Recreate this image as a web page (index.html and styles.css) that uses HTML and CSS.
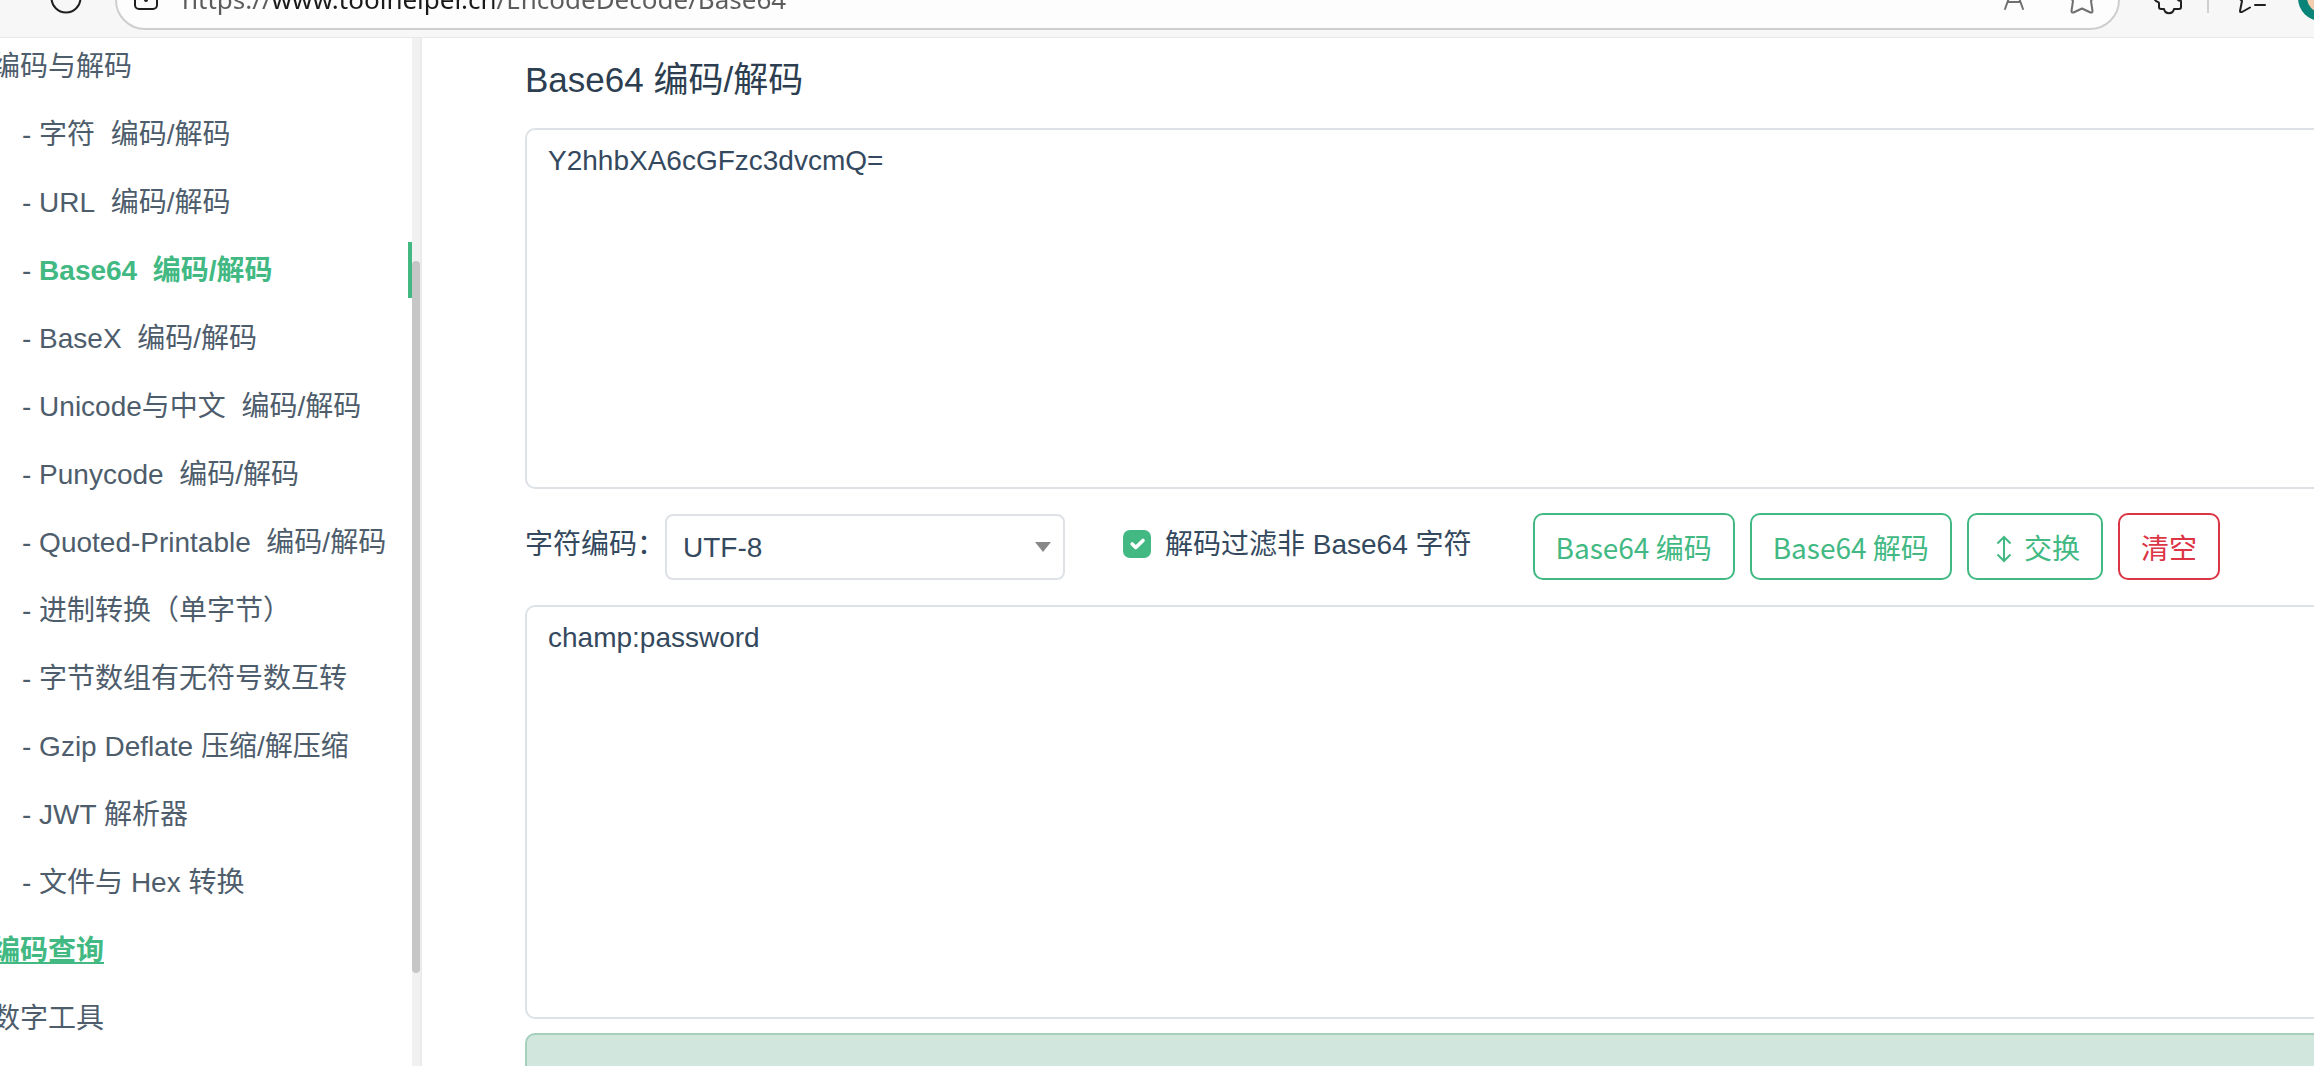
FILE: index.html
```html
<!DOCTYPE html>
<html lang="zh-CN">
<head>
  <meta charset="UTF-8" />
  <meta name="viewport" content="width=device-width, initial-scale=1.0"/>
  <title>Base64 编码/解码</title>
  <link rel="stylesheet" href="styles.css">
</head>
<body>
  <header class="toolbar">
    <button class="icon-btn reload" aria-label="刷新">
      <svg viewBox="0 0 40 60"><circle cx="20" cy="28" r="14.5"/></svg>
    </button>
    <div class="address">
      <svg viewBox="0 0 40 60"><rect x="9" y="18" width="22" height="21" rx="4"/><circle class="dot" cx="20" cy="30" r="2"/></svg>
      <input class="url" type="text" aria-label="地址" value="https://www.toolhelper.cn/EncodeDecode/Base64">
      <button class="icon-btn muted" aria-label="朗读">
        <svg viewBox="0 0 40 60"><path d="M11 39 L20 14 L29 39 M13.500 32 H26.500"/></svg>
      </button>
      <button class="icon-btn muted" aria-label="收藏">
        <svg viewBox="0 0 40 60"><path d="M20 14 L24 23 L33 24 L29 31 L30.500 41 Q30.500 43 28.500 42.500 L20 38.500 L11.500 42.500 Q9.500 43 9.500 41 L11 31 L6 24 L16 23 Z"/></svg>
      </button>
    </div>
    <button class="icon-btn" aria-label="扩展">
      <svg viewBox="0 0 40 60"><path d="M7 30 C9 33 11 31 11 33 V37 Q11 39 13 39 H16 C17 44.500 25 44.500 26 39 H31 Q33 39 33 37 V31 C28 31 28 24 33 24 V18 H7 Z"/></svg>
    </button>
    <span class="divider"></span>
    <button class="icon-btn" aria-label="收藏夹">
      <svg viewBox="0 0 40 60"><path d="M10 27 L14 31 L12 41 Q12 42.500 14 42 L22 37.500 M27 35 H37"/></svg>
    </button>
    <span class="avatar"><i></i></span>
  </header>

  <div class="layout">
    <aside class="sidebar">
      <nav class="menu">
        <a class="group" href="#">编码与解码</a>
        <ul>
          <li>- <a href="#">字符&nbsp; 编码/解码</a></li>
          <li>- <a href="#">URL&nbsp; 编码/解码</a></li>
          <li class="active">- <a href="#">Base64&nbsp; 编码/解码</a></li>
          <li>- <a href="#">BaseX&nbsp; 编码/解码</a></li>
          <li>- <a href="#">Unicode与中文&nbsp; 编码/解码</a></li>
          <li>- <a href="#">Punycode&nbsp; 编码/解码</a></li>
          <li>- <a href="#">Quoted-Printable&nbsp; 编码/解码</a></li>
          <li>- <a href="#">进制转换（单字节）</a></li>
          <li>- <a href="#">字节数组有无符号数互转</a></li>
          <li>- <a href="#">Gzip Deflate 压缩/解压缩</a></li>
          <li>- <a href="#">JWT 解析器</a></li>
          <li>- <a href="#">文件与 Hex 转换</a></li>
        </ul>
        <a class="group hover" href="#">编码查询</a>
        <a class="group" href="#">数字工具</a>
      </nav>
      <div class="scrollbar"><div class="thumb"></div></div>
    </aside>

    <main class="content">
      <h1>Base64 编码/解码</h1>
      <textarea class="source" aria-label="输入">Y2hhbXA6cGFzc3dvcmQ=</textarea>

      <div class="controls">
        <label for="charset">字符编码：</label>
        <div class="select">
          <select id="charset">
            <option>UTF-8</option>
            <option>GBK</option>
          </select>
        </div>
        <input type="checkbox" id="filter" checked>
        <label for="filter">解码过滤非 Base64 字符</label>
        <div class="buttons">
          <button class="btn">Base64 编码</button>
          <button class="btn">Base64 解码</button>
          <button class="btn"><svg viewBox="0 0 28 28"><path d="M14 2 V26 M7.500 8.500 L14 2 L20.500 8.500 M7.500 19.500 L14 26 L20.500 19.500"/></svg> 交换</button>
          <button class="btn danger">清空</button>
        </div>
      </div>

      <textarea class="result" aria-label="输出">champ:password</textarea>
      <div class="alert"></div>
    </main>
  </div>
</body>
</html>
```
FILE: styles.css
```css
* {
  box-sizing: border-box;
}

body {
  margin: 0;
  height: 100vh;
  display: flex;
  flex-direction: column;
  overflow: hidden;
  background-color: #fff;
  color: #34495e;
  font-family: "Liberation Sans", "Noto Sans CJK SC", sans-serif;
  font-size: 28px;
  line-height: 42px;
}

a {
  color: inherit;
  text-decoration: none;
}

button,
input,
select,
textarea {
  font: inherit;
  color: inherit;
}

/* browser bar */
.toolbar {
  flex: none;
  display: flex;
  align-items: flex-end;
  height: 38px;
  padding: 0 0 7px 46px;
  overflow: hidden;
  background-color: #f7f7f7;
  border-bottom: 1px solid #e8e8e8;
}

.toolbar svg {
  display: block;
  flex: none;
  width: 40px;
  height: 60px;
  fill: none;
  stroke: #1f1f1f;
  stroke-width: 2;
  stroke-linecap: round;
  stroke-linejoin: round;
}

.toolbar svg .dot {
  fill: #1f1f1f;
  stroke: none;
}

.icon-btn {
  flex: none;
  padding: 0;
  border: none;
  background: none;
}

.reload {
  margin-right: 29px;
}

.toolbar .muted svg {
  stroke: #707070;
}

.address {
  flex: 1;
  display: flex;
  align-items: center;
  height: 60px;
  margin-right: 28px;
  padding: 0 16px 0 9px;
  background-color: #fdfdfd;
  border: 2px solid #cecece;
  border-radius: 30px;
}

.address .icon-btn + .icon-btn {
  margin-left: 28px;
}

/* host name is darker than the rest of the url */
.url {
  flex: 1;
  min-width: 0;
  height: 42px;
  margin-left: 16px;
  padding: 0 0 2px;
  border: none;
  outline: none;
  font-family: "Noto Sans", sans-serif;
  font-size: 26px;
  background: linear-gradient(to right, #5c5c5c 89px, #1a1a1a 89px, #1a1a1a 312px, #5c5c5c 312px);
  -webkit-background-clip: text;
  background-clip: text;
  -webkit-text-fill-color: transparent;
}

.divider {
  flex: none;
  width: 2px;
  height: 40px;
  margin: 0 19px 17px;
  background-color: #d0d0d0;
}

.avatar {
  flex: none;
  display: flex;
  align-items: center;
  justify-content: center;
  width: 46px;
  height: 46px;
  margin: 0 -30px 9px 30px;
  border-radius: 50%;
  background-color: #0a8378;
}

.avatar i {
  width: 28px;
  height: 28px;
  border-radius: 50%;
  background-color: #f3cdb0;
}

.layout {
  flex: 1;
  display: flex;
  min-height: 0;
}

/* sidebar */
.sidebar {
  flex: none;
  display: flex;
  width: 422px;
  border-right: 2px solid #ebebeb;
  color: #4e5d6c;
}

.menu {
  flex: 1;
  display: flex;
  flex-direction: column;
  gap: 12px;
  overflow: hidden;
  line-height: 57px;
}

.menu .group {
  height: 56px;
  margin-left: -8px;
}

.menu .hover {
  color: #42b983;
  font-weight: bold;
  text-decoration: underline;
}

.menu ul {
  display: flex;
  flex-direction: column;
  gap: 12px;
  margin: 0;
  padding: 0;
  list-style: none;
}

.menu li {
  height: 56px;
  padding-left: 22px;
  white-space: nowrap;
}

.menu .active {
  border-right: 4px solid #42b983;
}

.menu .active a {
  color: #42b983;
  font-weight: bold;
}

.scrollbar {
  width: 8px;
  background-color: #f1f1f1;
}

.thumb {
  height: 712px;
  margin-top: 223px;
  border-radius: 4px;
  background-color: #c6c6c6;
}

/* main area, runs past the right edge of the window */
.content {
  flex: 1;
  display: flex;
  flex-direction: column;
  margin-right: -40px;
  padding: 21px 0 0 103px;
  overflow: hidden;
}

h1 {
  margin: 0 0 27px;
  color: #2c3e50;
  font-size: 35px;
  font-weight: normal;
  line-height: 42px;
}

textarea {
  display: block;
  flex: none;
  width: 100%;
  padding: 10px 21px;
  border: 2px solid #dee2e6;
  border-radius: 10px;
  outline: none;
  resize: none;
  background-color: #fff;
}

.source {
  height: 361px;
}

.result {
  height: 414px;
}

.controls {
  flex: none;
  display: flex;
  align-items: center;
  margin: 24px 0 25px;
}

.controls label {
  padding-bottom: 4px;
}

.select {
  position: relative;
  width: 400px;
}

.select select {
  display: block;
  width: 100%;
  height: 66px;
  padding: 2px 16px 0;
  appearance: none;
  border: 2px solid #dee2e6;
  border-radius: 8px;
  background-color: #fff;
}

.select::after {
  content: "";
  position: absolute;
  top: 28px;
  right: 14px;
  border: 8px solid transparent;
  border-top: 10px solid #888;
  border-bottom: none;
  pointer-events: none;
}

input[type="checkbox"] {
  width: 28px;
  height: 28px;
  margin: 0 14px 6px 58px;
  appearance: none;
  border: 2px solid #dee2e6;
  border-radius: 7px;
}

input[type="checkbox"]:checked {
  border: none;
  background: #42b983 url("data:image/svg+xml,%3Csvg xmlns='http://www.w3.org/2000/svg' viewBox='0 0 20 20'%3E%3Cpath fill='none' stroke='%23fff' stroke-linecap='round' stroke-linejoin='round' stroke-width='3' d='m6 10 3 3 6-6'/%3E%3C/svg%3E") center / 24px no-repeat;
}

.buttons {
  display: flex;
  gap: 15px;
  margin-left: 61px;
}

.btn {
  height: 67px;
  padding: 0 21px;
  border: 2px solid #42b983;
  border-radius: 10px;
  background-color: #fff;
  color: #42b983;
  font-family: "Noto Sans CJK SC", sans-serif;
  white-space: nowrap;
  cursor: pointer;
}

.btn svg {
  width: 28px;
  height: 28px;
  vertical-align: -4px;
  fill: none;
  stroke: currentColor;
  stroke-width: 2;
}

.btn.danger {
  border-color: #dc3545;
  color: #dc3545;
}

.alert {
  flex: none;
  height: 90px;
  margin-top: 14px;
  border: 2px solid #a3cfbb;
  border-radius: 10px;
  background-color: #d1e7dd;
}
```
